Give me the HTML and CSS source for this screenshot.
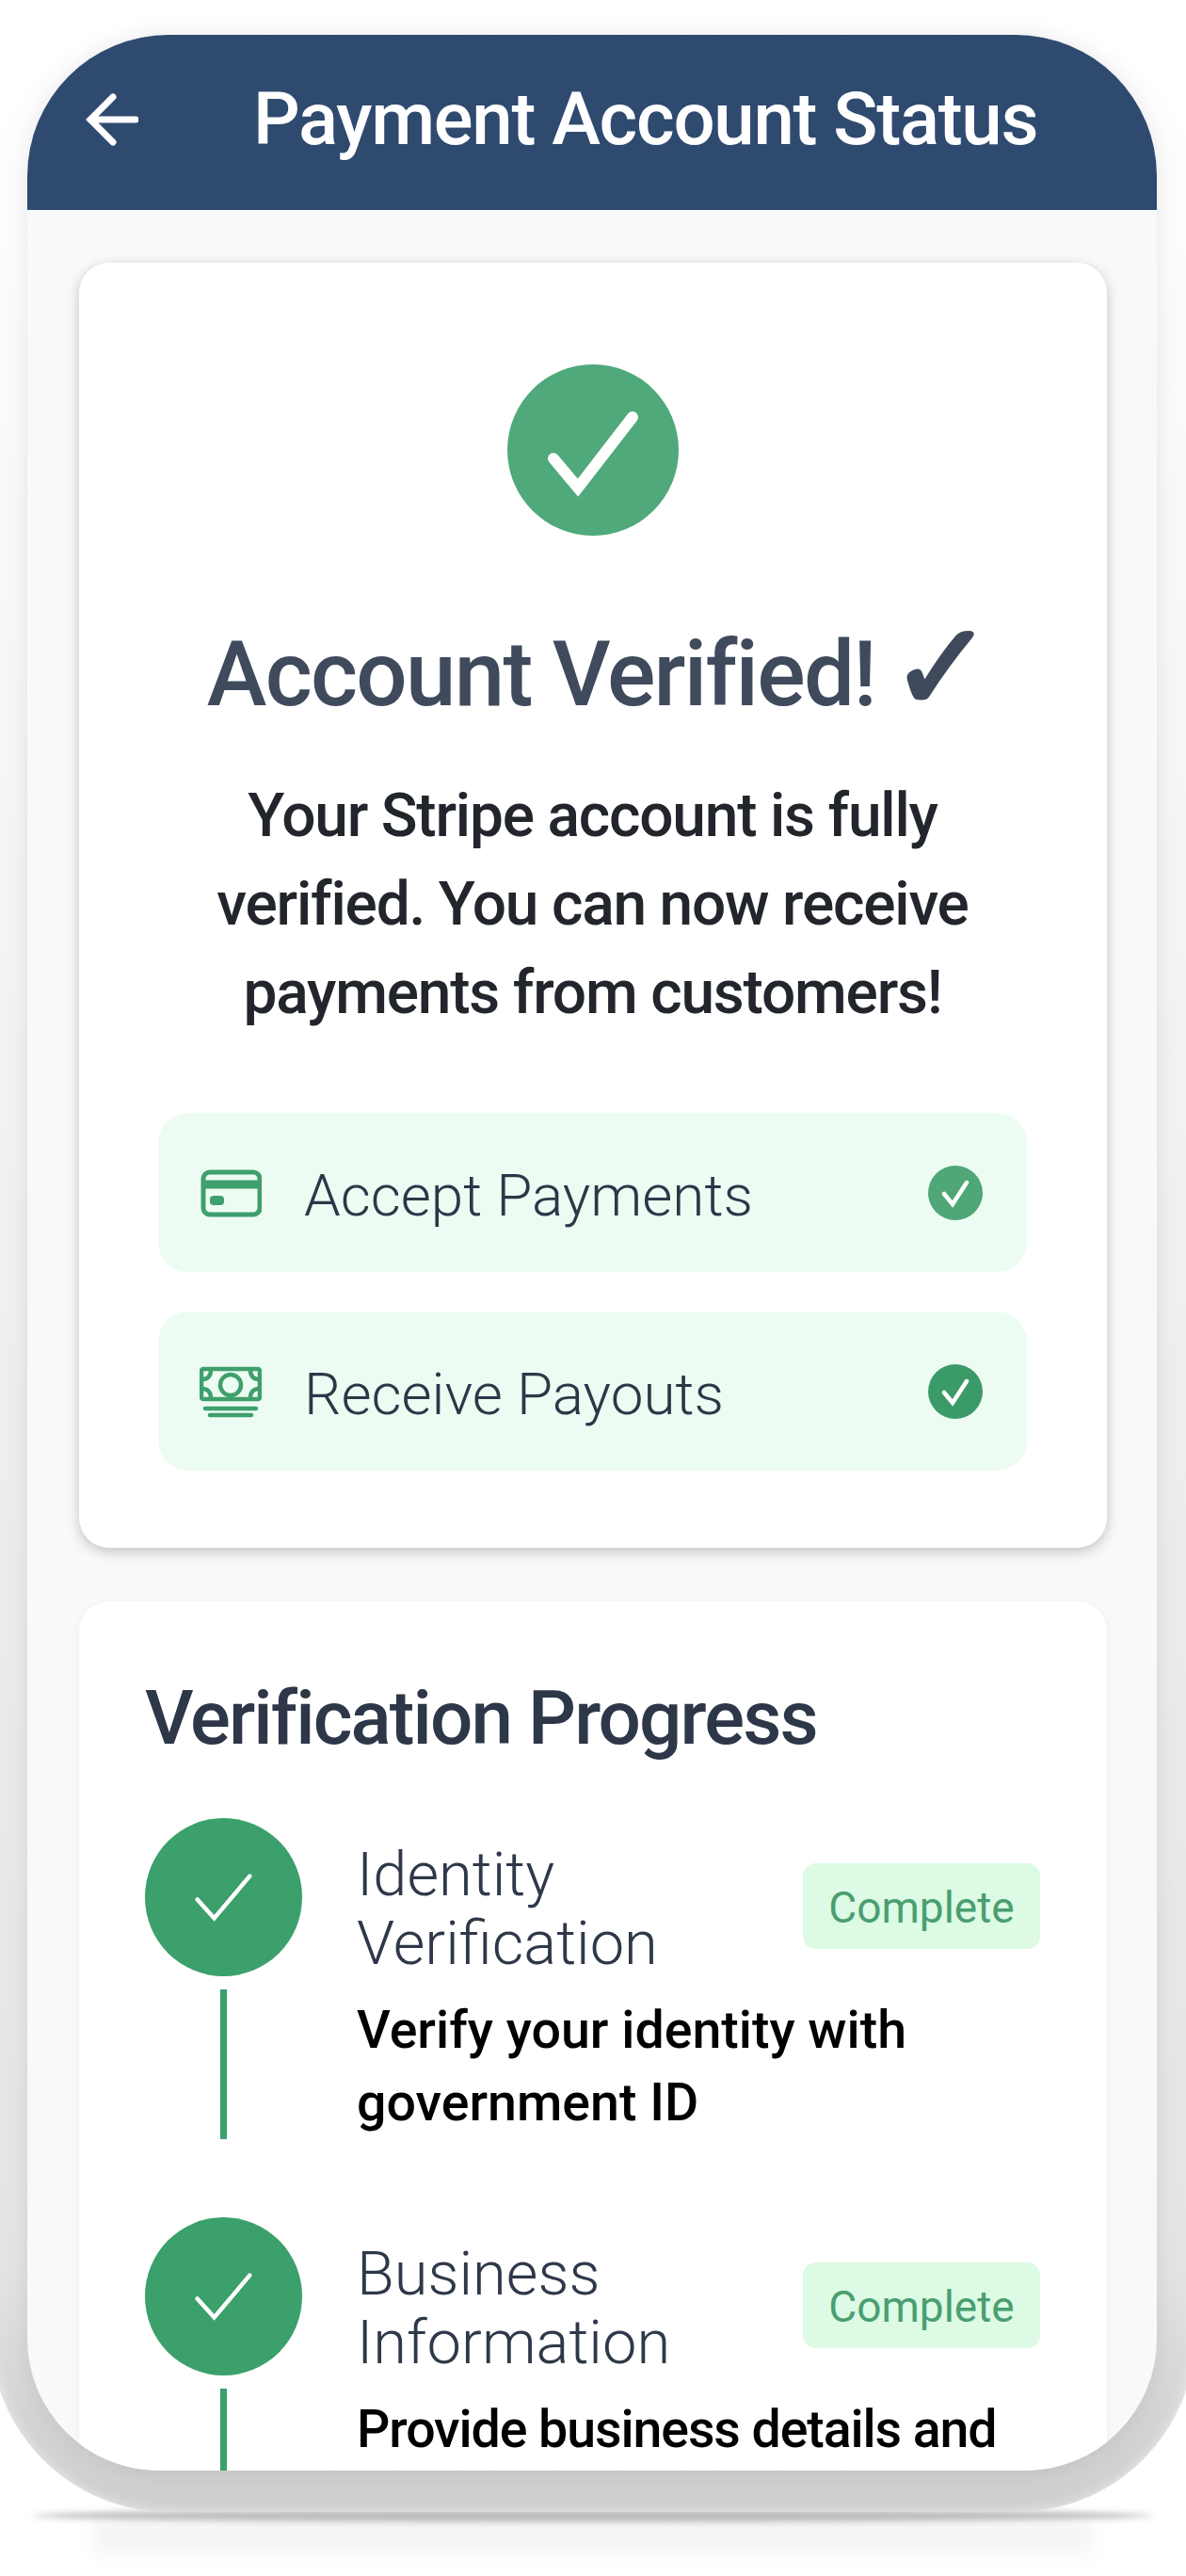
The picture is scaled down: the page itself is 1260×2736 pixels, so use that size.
FILE: index.html
```html
<!DOCTYPE html>
<html lang="en">
<head>
    <meta charset="UTF-8">
    <title>Payment Account Status</title>
    <link rel="stylesheet" href="styles.css">
</head>
<body>
    <div class="phone">
        <div class="screen">
            <header class="app-bar">
                <svg class="back-icon" viewBox="0 0 56 56" fill="none" stroke="#fff" stroke-width="7" stroke-linecap="round" stroke-linejoin="miter">
                    <path d="M53 28H5M29 4L5 28l24 24"/>
                </svg>
                <h1 class="app-title">Payment Account Status</h1>
            </header>
            <main class="content">
                <section class="card status-card">
                    <div class="status-circle">
                        <svg viewBox="0 0 182 182" fill="none" stroke="#fff" stroke-width="12" stroke-linecap="round" stroke-linejoin="miter">
                            <path d="M49 100l26 31 58-75"/>
                        </svg>
                    </div>
                    <h2 class="status-title">Account Verified! <span class="status-tick">✓</span></h2>
                    <p class="status-text">Your Stripe account is fully verified. You can now receive payments from customers!</p>
                    <div class="feature-row">
                        <svg class="feature-icon" viewBox="0 0 66 66" fill="none" stroke="#3f9f6d">
                            <rect x="4" y="11" width="60" height="45" rx="7" stroke-width="5"/>
                            <path d="M4 24h60" stroke-width="9"/>
                            <rect x="11" y="36" width="15" height="10" rx="4" fill="#3f9f6d" stroke="none"/>
                        </svg>
                        <span class="feature-label">Accept Payments</span>
                        <span class="mini-check mini-check-light">
                            <svg viewBox="0 0 58 58" fill="none" stroke="#fff" stroke-width="4.5" stroke-linecap="round"><path d="M17 30l9 11 15-23"/></svg>
                        </span>
                    </div>
                    <div class="feature-row">
                        <svg class="feature-icon" viewBox="0 0 66 66" fill="none" stroke="#3f9f6d" stroke-width="4.5">
                            <rect x="2" y="9" width="62" height="32" rx="2"/>
                            <circle cx="33" cy="26" r="11"/>
                            <path d="M3 20c6 0 9-4 9-10M63 20c-6 0-9-4-9-10M3 30c6 0 9 4 9 10M63 30c-6 0-9 4-9 10"/>
                            <path d="M6 51h54M11 58h44" stroke-linecap="round"/>
                        </svg>
                        <span class="feature-label">Receive Payouts</span>
                        <span class="mini-check">
                            <svg viewBox="0 0 58 58" fill="none" stroke="#fff" stroke-width="4.5" stroke-linecap="round"><path d="M17 30l9 11 15-23"/></svg>
                        </span>
                    </div>
                </section>

                <section class="card progress-card">
                    <h2 class="progress-title">Verification Progress</h2>
                    <div class="step">
                        <div class="step-marker">
                            <div class="step-circle">
                                <svg viewBox="0 0 168 168" fill="none" stroke="#fff" stroke-width="4.5" stroke-linecap="round"><path d="M56 87l18 20 38-45"/></svg>
                            </div>
                            <div class="step-line"></div>
                        </div>
                        <div class="step-body">
                            <div class="step-head">
                                <h3 class="step-title">Identity Verification</h3>
                                <span class="badge">Complete</span>
                            </div>
                            <p class="step-desc">Verify your identity with government ID</p>
                        </div>
                    </div>
                    <div class="step">
                        <div class="step-marker">
                            <div class="step-circle">
                                <svg viewBox="0 0 168 168" fill="none" stroke="#fff" stroke-width="4.5" stroke-linecap="round"><path d="M56 87l18 20 38-45"/></svg>
                            </div>
                            <div class="step-line"></div>
                        </div>
                        <div class="step-body">
                            <div class="step-head">
                                <h3 class="step-title">Business Information</h3>
                                <span class="badge">Complete</span>
                            </div>
                            <p class="step-desc step-desc-tight">Provide business details and</p>
                        </div>
                    </div>
                </section>
            </main>
        </div>
    </div>
</body>
</html>
```

FILE: styles.css
```css
body {
    margin: 0;
    height: 2736px;
    overflow: hidden;
    background-color: #fff;
    font-family: Roboto, "Noto Sans", sans-serif;
    color: #2d3748;
}
h1, h2, h3, p {
    margin: 0;
    font-weight: 400;
}

/* device frame */
.phone {
    position: relative;
    width: 1200px;
    margin: 20px -10px 0;
    padding: 17px 41px 44px 39px;
    border-radius: 190px;
    background: linear-gradient(to bottom, #fff 0%, #f3f3f3 40%, #e4e4e4 90%, #d4d4d4 96%, #cecece 100%);
    box-shadow: inset 0 0 14px rgba(255, 255, 255, 0.6);
}
/* shadow the phone drops on the floor */
.phone::before {
    content: "";
    position: absolute;
    left: 110px;
    right: 110px;
    bottom: -44px;
    height: 36px;
    background: #f4f4f4;
    filter: blur(10px);
    z-index: -1;
}
.phone::after {
    content: "";
    position: absolute;
    left: 45px;
    right: 45px;
    bottom: -11px;
    height: 14px;
    border-radius: 50%;
    background: #bcbcbc;
    filter: blur(3px);
    z-index: -1;
}
.screen {
    height: 2587px;
    overflow: hidden;
    border-radius: 150px 150px 140px 140px;
    background-color: #f7f9fb;
    box-shadow: 0 0 24px rgba(0, 0, 0, 0.09);
}

/* top bar */
.app-bar {
    display: flex;
    align-items: center;
    gap: 122px;
    height: 186px;
    padding-left: 62px;
    background-color: #2f4a6f;
}
.back-icon {
    width: 56px;
    height: 56px;
    margin-top: -6px;
}
.app-title {
    font-size: 78px;
    font-weight: 500;
    line-height: 90px;
    letter-spacing: -1.3px;
    color: #fff;
    margin-top: -6px;
}

.content {
    display: flex;
    flex-direction: column;
    gap: 57px;
    padding: 56px 53px 0 55px;
}
.card {
    border-radius: 32px;
    background-color: #fff;
}

/* verified card */
.status-card {
    display: flex;
    flex-direction: column;
    align-items: center;
    padding: 108px 85px 82px 84px;
    box-shadow: 0 4px 14px rgba(0, 0, 0, 0.22);
}
.status-circle {
    width: 182px;
    height: 182px;
    border-radius: 50%;
    background-color: #4fa97a;
}
.status-circle svg {
    display: block;
}
.status-title {
    margin-top: 87px;
    margin-left: 14px;
    font-size: 96px;
    font-weight: 500;
    line-height: 120px;
    letter-spacing: -1.75px;
    color: #3f4a5c;
}
.status-tick {
    margin-left: -6px;
    font-family: "DejaVu Sans", sans-serif;
    font-size: 130px;
    font-weight: 400;
    line-height: 0;
    vertical-align: -5px;
    -webkit-text-stroke: 4px #3f4a5c;
}
.status-text {
    margin-top: 44px;
    padding: 0 40px;
    font-size: 64px;
    font-weight: 500;
    line-height: 94px;
    letter-spacing: -1.2px;
    text-align: center;
    color: #22262c;
}
.feature-row {
    display: flex;
    align-items: center;
    align-self: stretch;
    height: 169px;
    padding: 0 47px 0 44px;
    border-radius: 32px;
    background-color: #edfcf3;
}
.status-text + .feature-row {
    margin-top: 80px;
}
.feature-row + .feature-row {
    margin-top: 42px;
}
.feature-icon {
    flex: none;
    width: 66px;
    height: 66px;
}
.feature-label {
    flex: 1;
    margin-left: 45px;
    padding-top: 6px;
    font-size: 62px;
    font-weight: 300;
    color: #2d3748;
}
.mini-check {
    flex: none;
    width: 58px;
    height: 58px;
    border-radius: 50%;
    background-color: #3a9a68;
}
.mini-check-light {
    background-color: #4fa677;
}
.mini-check svg {
    display: block;
}

/* progress card */
.progress-card {
    padding: 0 71px 0 70px;
    box-shadow: 0 2px 8px rgba(0, 0, 0, 0.05);
}
.progress-title {
    padding-top: 66px;
    font-size: 80px;
    font-weight: 500;
    line-height: 116px;
    letter-spacing: -1.9px;
    margin-bottom: 48px;
}
.step {
    display: flex;
    gap: 58px;
    padding-bottom: 83px;
}
.step-marker {
    flex: none;
    width: 167px;
}
.step-circle {
    width: 167px;
    height: 168px;
    border-radius: 50%;
    background-color: #3ba06b;
}
.step-circle svg {
    display: block;
}
.step-line {
    width: 7px;
    height: 159px;
    margin: 14px 0 0 80px;
    background-color: #3ba06b;
}
.step-body {
    flex: 1;
    padding-top: 24px;
}
.step-head {
    display: flex;
    align-items: center;
    justify-content: space-between;
}
.step-title {
    width: 400px;
    font-size: 65px;
    font-weight: 300;
    line-height: 73px;
    color: #2f384a;
}
.badge {
    flex: none;
    display: flex;
    align-items: center;
    justify-content: center;
    box-sizing: border-box;
    width: 252px;
    height: 91px;
    margin-top: -8px;
    padding-top: 4px;
    border-radius: 14px;
    background-color: #dcfae4;
    font-size: 46px;
    color: #4a9e70;
}
.step-desc {
    margin-top: 17px;
    font-size: 55.5px;
    font-weight: 500;
    line-height: 77px;
    color: #000;
}
.step-desc-tight {
    letter-spacing: -1.1px;
}
```
